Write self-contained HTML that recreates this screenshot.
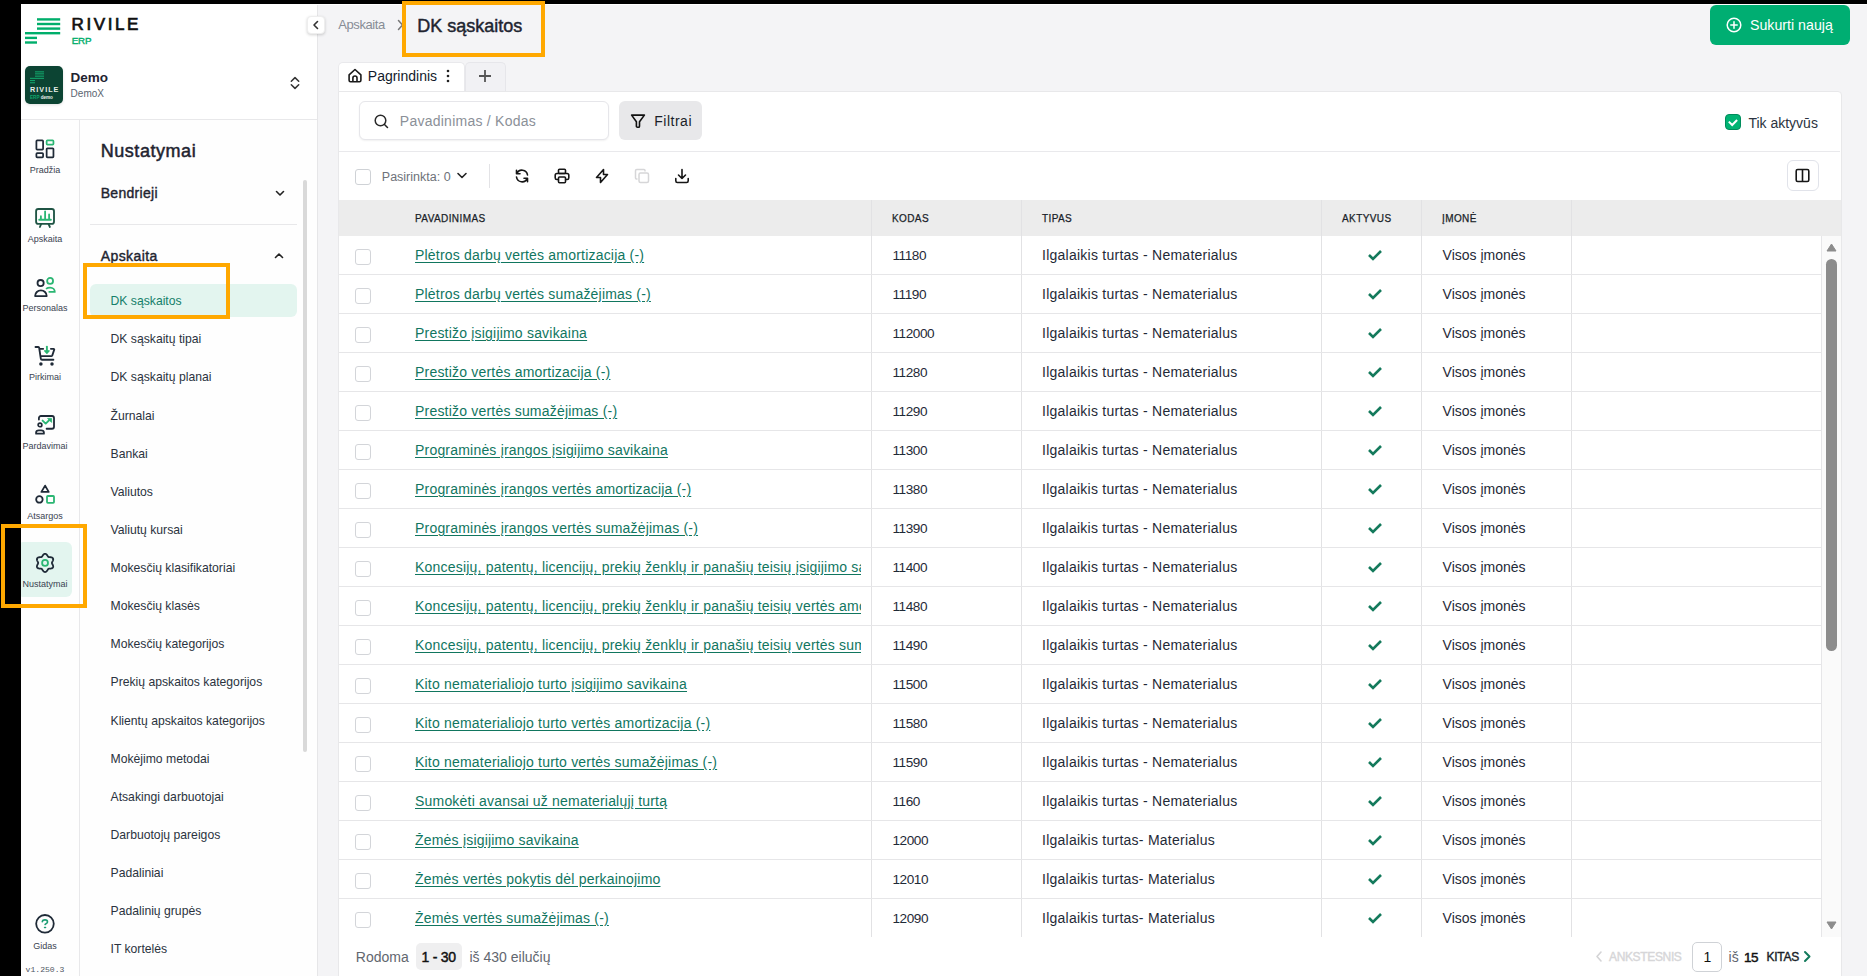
<!DOCTYPE html>
<html><head><meta charset="utf-8">
<style>
*{box-sizing:border-box;margin:0;padding:0}
html,body{width:1867px;height:976px;overflow:hidden;background:#000;font-family:"Liberation Sans",sans-serif;color:#1f2937;position:relative}
.a{position:absolute}
.t{position:absolute;white-space:nowrap;line-height:1}
</style></head><body>
<div class="a" style="left:21px;top:4px;width:296px;height:972px;background:#ffffff;"></div>
<div class="a" style="left:317px;top:4px;width:1px;height:972px;background:#e6e6e8;"></div>
<div class="a" style="left:21px;top:120px;width:58px;height:856px;background:#fefefe;"></div>
<div class="a" style="left:80px;top:120px;width:237px;height:856px;background:#fefefe;"></div>
<div class="a" style="left:21px;top:119px;width:296px;height:1px;background:#e8e8ea;"></div>
<div class="a" style="left:79px;top:120px;width:1px;height:856px;background:#e8e8ea;"></div>
<svg class="a" style="left:25px;top:18px;" width="36" height="27" viewBox="0 0 36 27" fill="none"><rect x="12" y="0.1999999999999993" width="23.2" height="2.4" fill="#00ae6b"/><rect x="12" y="4.800000000000001" width="23.2" height="2.4" fill="#00ae6b"/><rect x="12" y="9.399999999999999" width="23.2" height="2.4" fill="#00ae6b"/><rect x="0" y="14.0" width="35.2" height="2.4" fill="#00ae6b"/><rect x="0" y="18.700000000000003" width="12" height="2.4" fill="#00ae6b"/><rect x="0" y="23.299999999999997" width="12" height="2.4" fill="#00ae6b"/></svg>
<div class="t" style="left:71.50px;top:16.00px;font-size:17px;color:#111111;letter-spacing:2.6px;-webkit-text-stroke:0.7px #111;">RIVILE</div>
<div class="t" style="left:71.70px;top:36.00px;font-size:9.8px;color:#00ae6b;letter-spacing:-0.15px;-webkit-text-stroke:0.4px #00ae6b;">ERP</div>
<div class="a" style="left:25px;top:66px;width:38px;height:38px;background:#0c4433;border-radius:5px;box-shadow:0 1px 3px rgba(0,0,0,0.12);"></div>
<svg class="a" style="left:25px;top:66px;" width="38" height="38" viewBox="0 0 38 38" fill="none"><rect x="10" y="5.299999999999997" width="9" height="1.1" fill="#12a36a"/><rect x="10" y="7.299999999999997" width="9" height="1.1" fill="#12a36a"/><rect x="10" y="9.599999999999994" width="9" height="1.1" fill="#12a36a"/><rect x="5" y="11.799999999999997" width="14" height="1.1" fill="#12a36a"/><rect x="5" y="14.0" width="5" height="1.1" fill="#12a36a"/><rect x="5" y="16.200000000000003" width="5" height="1.1" fill="#12a36a"/></svg>
<div class="t" style="left:30.00px;top:86.00px;font-size:7.2px;font-weight:700;color:#e8efe9;letter-spacing:1.05px;">RIVILE</div>
<div class="t" style="left:30.00px;top:96.00px;font-size:4.6px;font-weight:700;color:#e8efe9;"><span style="color:#12a36a">ERP</span> demo</div>
<div class="t" style="left:70.60px;top:71.00px;font-size:13.5px;font-weight:700;color:#1f2430;">Demo</div>
<div class="t" style="left:70.60px;top:89.00px;font-size:10px;color:#5b6470;">DemoX</div>
<svg class="a" style="left:289px;top:76px;" width="12" height="14" viewBox="0 0 12 14" fill="none"><path d="M2.3 5.3 L6 1.6 L9.7 5.3 M2.3 8.7 L6 12.4 L9.7 8.7" stroke="#333" stroke-width="1.5" stroke-linecap="round" stroke-linejoin="round"/></svg>
<div class="a" style="left:17px;top:542px;width:55px;height:55px;background:#e3f5ef;border-radius:6px;"></div>
<div class="a" style="left:0px;top:0px;width:21px;height:976px;background:#000;"></div>
<div class="t" style="left:21px;width:48px;text-align:center;top:166px;font-size:9px;color:#3a4250">Pradžia</div>
<div class="t" style="left:21px;width:48px;text-align:center;top:235px;font-size:9px;color:#3a4250">Apskaita</div>
<div class="t" style="left:21px;width:48px;text-align:center;top:304px;font-size:9px;color:#3a4250">Personalas</div>
<div class="t" style="left:21px;width:48px;text-align:center;top:373px;font-size:9px;color:#3a4250">Pirkimai</div>
<div class="t" style="left:21px;width:48px;text-align:center;top:442px;font-size:9px;color:#3a4250">Pardavimai</div>
<div class="t" style="left:21px;width:48px;text-align:center;top:512px;font-size:9px;color:#3a4250">Atsargos</div>
<div class="t" style="left:21px;width:48px;text-align:center;top:580px;font-size:9px;color:#3a4250">Nustatymai</div>
<div class="t" style="left:21px;width:48px;text-align:center;top:942px;font-size:9px;color:#3a4250">Gidas</div>
<div class="t" style="left:21px;width:48px;text-align:center;top:965.5px;font-size:8.1px;color:#505764;font-family:'Liberation Mono',monospace">v1.250.3</div>
<svg class="a" style="left:30px;top:134px;" width="30" height="30" viewBox="0 0 30 30" fill="none"><rect x="6.4" y="6.4" width="6.7" height="9.2" rx="0.8" stroke="#1f2a37" stroke-width="1.75"/><rect x="6.4" y="19.15" width="6.7" height="4.1" rx="0.8" stroke="#1f2a37" stroke-width="1.75"/><rect x="16.65" y="6.4" width="6.8" height="4.25" rx="0.8" stroke="#2bb673" stroke-width="1.75"/><rect x="16.65" y="14.25" width="6.8" height="9" rx="0.8" stroke="#1f2a37" stroke-width="1.75"/></svg>
<svg class="a" style="left:30px;top:203px;" width="30" height="30" viewBox="0 0 30 30" fill="none"><rect x="6.1" y="6" width="17.9" height="14.9" rx="2.2" stroke="#1f5444" stroke-width="1.85"/><path d="M9.2 16.75 H20.9 M10.9 16.75 V13.2 M15.1 16.75 V8.3 M19.1 16.75 V11.4" stroke="#2bb673" stroke-width="1.8" stroke-linecap="round"/><path d="M11.1 21.2 L9.9 24 M18.6 21.2 L19.9 24" stroke="#1f5444" stroke-width="1.8" stroke-linecap="round"/></svg>
<svg class="a" style="left:30px;top:272px;" width="30" height="30" viewBox="0 0 30 30" fill="none"><circle cx="10.6" cy="11.1" r="3.1" stroke="#1f2a37" stroke-width="1.8"/><path d="M5.1 24.1 A5.8 5.8 0 0 1 16.7 24.1 Z" stroke="#1f2a37" stroke-width="1.8" stroke-linejoin="round"/><circle cx="20.1" cy="8.9" r="2.95" stroke="#2bb673" stroke-width="1.8"/><path d="M16 16.9 C17.2 16 18.6 15.6 20.1 15.6 C23 15.6 24.8 17.6 24.8 19.9 H18.6" stroke="#2bb673" stroke-width="1.8" stroke-linejoin="round"/></svg>
<svg class="a" style="left:30px;top:341px;" width="30" height="30" viewBox="0 0 30 30" fill="none"><path d="M5.5 6 H8.3 C8.8 6 9.1 6.4 9.2 7 L10.8 17.6 C10.9 18.3 11.4 18.75 12 18.75 H23.4" stroke="#1f2a37" stroke-width="1.85" stroke-linecap="round" stroke-linejoin="round"/><path d="M10.2 7.85 H13.2 M20.9 7.85 H23.6 C24.1 7.85 24.4 8.3 24.2 8.8 L22.3 14.4 C22.1 14.8 21.8 15.1 21.3 15.1 H11.4" stroke="#1f2a37" stroke-width="1.85" stroke-linecap="round" stroke-linejoin="round"/><circle cx="10.9" cy="22.9" r="1.75" fill="#1f2a37"/><circle cx="22" cy="22.9" r="1.75" fill="#1f2a37"/><path d="M16.9 5.6 V10.5" stroke="#2bb673" stroke-width="1.9" stroke-linecap="round"/><path d="M14.6 9.8 H19.2 L16.9 12.4 Z" fill="#2bb673" stroke="#2bb673" stroke-width="1.2" stroke-linejoin="round"/></svg>
<svg class="a" style="left:30px;top:410px;" width="30" height="30" viewBox="0 0 30 30" fill="none"><path d="M8.9 9.5 V8 C8.9 6.8 9.8 6 11 6 H22 C23.2 6 24 6.8 24 8 V16.7 C24 17.9 23.2 18.75 22 18.75 H16.6" stroke="#1f2a37" stroke-width="1.8" stroke-linecap="round"/><circle cx="10" cy="14.9" r="1.85" stroke="#1f2a37" stroke-width="1.7"/><path d="M6.1 23.7 V22.6 C6.1 21.1 7.4 20.3 9 20.3 H11 C12.6 20.3 13.9 21.1 13.9 22.6 V23.7 Z" stroke="#1f2a37" stroke-width="1.8" stroke-linejoin="round"/><path d="M12.6 10.6 L15.7 13.6 L19.6 9.8" stroke="#2bb673" stroke-width="1.9" stroke-linecap="round" stroke-linejoin="round"/><path d="M17.6 8.4 H21.6 V12.4 Z" fill="#2bb673" stroke="#2bb673" stroke-width="0.8" stroke-linejoin="round"/></svg>
<svg class="a" style="left:30px;top:479px;" width="30" height="30" viewBox="0 0 30 30" fill="none"><path d="M15.1 6.6 L18.7 12.9 H11.4 Z" stroke="#1f2a37" stroke-width="1.8" stroke-linejoin="round"/><circle cx="9.4" cy="20.45" r="3.25" stroke="#1f2a37" stroke-width="1.8"/><rect x="17" y="17" width="7" height="6.85" rx="0.8" stroke="#2bb673" stroke-width="1.8"/></svg>
<svg class="a" style="left:30px;top:548px;" width="30" height="30" viewBox="0 0 30 30" fill="none"><path d="M21.93 14.90 L21.98 14.54 L22.11 14.16 L22.30 13.75 L22.54 13.31 L22.78 12.83 L22.99 12.32 L23.13 11.80 L23.19 11.28 L23.13 10.78 L22.95 10.34 L22.65 9.96 L22.26 9.67 L21.78 9.45 L21.25 9.32 L20.71 9.24 L20.17 9.21 L19.67 9.19 L19.22 9.16 L18.83 9.08 L18.49 8.94 L18.20 8.72 L17.94 8.42 L17.68 8.05 L17.42 7.62 L17.12 7.17 L16.79 6.74 L16.40 6.35 L15.98 6.04 L15.52 5.85 L15.05 5.78 L14.58 5.85 L14.12 6.04 L13.70 6.35 L13.31 6.74 L12.98 7.17 L12.68 7.62 L12.42 8.05 L12.16 8.42 L11.90 8.72 L11.61 8.94 L11.27 9.08 L10.88 9.16 L10.43 9.19 L9.93 9.21 L9.39 9.24 L8.85 9.32 L8.32 9.45 L7.84 9.67 L7.45 9.96 L7.15 10.34 L6.97 10.78 L6.91 11.28 L6.97 11.80 L7.11 12.32 L7.32 12.83 L7.56 13.31 L7.80 13.75 L7.99 14.16 L8.12 14.54 L8.17 14.90 L8.12 15.26 L7.99 15.64 L7.80 16.05 L7.56 16.49 L7.32 16.97 L7.11 17.48 L6.97 18.00 L6.91 18.52 L6.97 19.02 L7.15 19.46 L7.45 19.84 L7.84 20.13 L8.32 20.35 L8.85 20.48 L9.39 20.56 L9.93 20.59 L10.43 20.61 L10.88 20.64 L11.27 20.72 L11.61 20.86 L11.90 21.08 L12.16 21.38 L12.42 21.75 L12.68 22.18 L12.98 22.63 L13.31 23.06 L13.70 23.45 L14.12 23.76 L14.58 23.95 L15.05 24.02 L15.52 23.95 L15.98 23.76 L16.40 23.45 L16.79 23.06 L17.12 22.63 L17.42 22.18 L17.68 21.75 L17.94 21.38 L18.20 21.08 L18.49 20.86 L18.83 20.72 L19.22 20.64 L19.67 20.61 L20.17 20.59 L20.71 20.56 L21.25 20.48 L21.78 20.35 L22.26 20.13 L22.65 19.84 L22.95 19.46 L23.13 19.02 L23.19 18.52 L23.13 18.00 L22.99 17.48 L22.78 16.97 L22.54 16.49 L22.30 16.05 L22.11 15.64 L21.98 15.26 L21.93 14.90Z" stroke="#1f2a37" stroke-width="1.8" stroke-linejoin="round"/><circle cx="15.05" cy="14.9" r="2.95" stroke="#2bb673" stroke-width="1.8"/></svg>
<svg class="a" style="left:33px;top:912px;" width="24" height="24" viewBox="0 0 24 24" fill="none"><circle cx="11.97" cy="11.8" r="8.8" stroke="#1f2a37" stroke-width="1.8"/><path d="M9.3 9.7 C9.5 8.5 10.6 7.9 12 7.9 C13.5 7.9 14.5 8.8 14.5 9.9 C14.5 11.2 12.9 11.6 12.1 12.5" stroke="#1e9e74" stroke-width="1.6" stroke-linecap="round"/><path d="M11.6 15.5 H12.5" stroke="#1e9e74" stroke-width="1.6" stroke-linecap="round"/></svg>
<div class="t" style="left:100.70px;top:142.00px;font-size:18px;color:#1f2430;letter-spacing:0.55px;-webkit-text-stroke:0.5px #1f2430;">Nustatymai</div>
<div class="t" style="left:100.70px;top:186.00px;font-size:14px;color:#1f2430;letter-spacing:0.3px;-webkit-text-stroke:0.4px #1f2430;">Bendrieji</div>
<svg class="a" style="left:274px;top:189px;" width="12" height="9" viewBox="0 0 12 9" fill="none"><path d="M2.5 2.5 L6 6 L9.5 2.5" stroke="#222" stroke-width="1.6" stroke-linecap="round" stroke-linejoin="round"/></svg>
<div class="a" style="left:90px;top:224px;width:207px;height:1px;background:#e8e8ea;"></div>
<div class="t" style="left:100.80px;top:249.00px;font-size:14px;color:#1f2430;letter-spacing:0.4px;-webkit-text-stroke:0.4px #1f2430;">Apskaita</div>
<svg class="a" style="left:273px;top:251px;" width="12" height="9" viewBox="0 0 12 9" fill="none"><path d="M2.5 6.5 L6 3 L9.5 6.5" stroke="#222" stroke-width="1.6" stroke-linecap="round" stroke-linejoin="round"/></svg>
<div class="a" style="left:90px;top:284px;width:207px;height:33px;background:#e3f5ef;border-radius:6px;"></div>
<div class="t" style="left:110.50px;top:295.00px;font-size:12.2px;color:#15806a;">DK sąskaitos</div>
<div class="t" style="left:110.50px;top:333.00px;font-size:12.2px;color:#2b3340;">DK sąskaitų tipai</div>
<div class="t" style="left:110.50px;top:371.00px;font-size:12.2px;color:#2b3340;">DK sąskaitų planai</div>
<div class="t" style="left:110.50px;top:410.00px;font-size:12.2px;color:#2b3340;">Žurnalai</div>
<div class="t" style="left:110.50px;top:448.00px;font-size:12.2px;color:#2b3340;">Bankai</div>
<div class="t" style="left:110.50px;top:486.00px;font-size:12.2px;color:#2b3340;">Valiutos</div>
<div class="t" style="left:110.50px;top:524.00px;font-size:12.2px;color:#2b3340;">Valiutų kursai</div>
<div class="t" style="left:110.50px;top:562.00px;font-size:12.2px;color:#2b3340;">Mokesčių klasifikatoriai</div>
<div class="t" style="left:110.50px;top:600.00px;font-size:12.2px;color:#2b3340;">Mokesčių klasės</div>
<div class="t" style="left:110.50px;top:638.00px;font-size:12.2px;color:#2b3340;">Mokesčių kategorijos</div>
<div class="t" style="left:110.50px;top:676.00px;font-size:12.2px;color:#2b3340;">Prekių apskaitos kategorijos</div>
<div class="t" style="left:110.50px;top:715.00px;font-size:12.2px;color:#2b3340;">Klientų apskaitos kategorijos</div>
<div class="t" style="left:110.50px;top:753.00px;font-size:12.2px;color:#2b3340;">Mokėjimo metodai</div>
<div class="t" style="left:110.50px;top:791.00px;font-size:12.2px;color:#2b3340;">Atsakingi darbuotojai</div>
<div class="t" style="left:110.50px;top:829.00px;font-size:12.2px;color:#2b3340;">Darbuotojų pareigos</div>
<div class="t" style="left:110.50px;top:867.00px;font-size:12.2px;color:#2b3340;">Padaliniai</div>
<div class="t" style="left:110.50px;top:905.00px;font-size:12.2px;color:#2b3340;">Padalinių grupės</div>
<div class="t" style="left:110.50px;top:943.00px;font-size:12.2px;color:#2b3340;">IT kortelės</div>
<div class="a" style="left:303px;top:180px;width:4px;height:572px;background:#d9d9d9;border-radius:2px;"></div>
<div class="a" style="left:318px;top:5px;width:1549px;height:971px;background:#f4f4f6;"></div>
<div class="a" style="left:317px;top:4px;width:1550px;height:1px;background:#ffffff;"></div>
<div class="a" style="left:307px;top:16px;width:18px;height:18px;background:#ffffff;border-radius:4px;box-shadow:0 1px 3px rgba(0,0,0,0.18);border:1px solid #eee;"></div>
<svg class="a" style="left:307px;top:16px;" width="18" height="18" viewBox="0 0 18 18" fill="none"><path d="M10.5 5.5 L7 9 L10.5 12.5" stroke="#333" stroke-width="1.6" stroke-linecap="round" stroke-linejoin="round"/></svg>
<div class="t" style="left:338.20px;top:18.00px;font-size:13px;color:#878c95;letter-spacing:-0.4px;">Apskaita</div>
<svg class="a" style="left:395px;top:18px;" width="10" height="14" viewBox="0 0 10 14" fill="none"><path d="M3.5 2.5 L7.5 7 L3.5 11.5" stroke="#777" stroke-width="1.5" stroke-linecap="round" stroke-linejoin="round"/></svg>
<div class="t" style="left:417.30px;top:17.00px;font-size:18px;color:#1f2430;-webkit-text-stroke:0.45px #1f2430;">DK sąskaitos</div>
<div class="a" style="left:1710px;top:5px;width:140px;height:40px;background:#00ae72;border-radius:6px;"></div>
<svg class="a" style="left:1726px;top:17px;" width="16" height="16" viewBox="0 0 16 16" fill="none"><circle cx="8" cy="8" r="6.8" stroke="#fff" stroke-width="1.5"/><path d="M8 4.8 V11.2 M4.8 8 H11.2" stroke="#fff" stroke-width="1.5" stroke-linecap="round"/></svg>
<div class="t" style="left:1750.00px;top:18.00px;font-size:14.2px;color:#ffffff;">Sukurti naują</div>
<div class="a" style="left:338px;top:61.5px;width:126.5px;height:30.5px;background:#ffffff;border-radius:5px 5px 0 0;border:1px solid #e9e9ec;border-bottom:none;"></div>
<div class="a" style="left:464.5px;top:61.5px;width:41px;height:30.5px;background:#f1f1f4;border-radius:5px 5px 0 0;border:1px solid #e6e6ea;border-bottom:none;"></div>
<svg class="a" style="left:347px;top:68px;" width="16" height="16" viewBox="0 0 16 16" fill="none"><path d="M2.1 6.8 L8 1.5 L13.9 6.8 V12.3 C13.9 13.1 13.3 13.8 12.5 13.8 H3.5 C2.7 13.8 2.1 13.1 2.1 12.3 Z M5.9 13.8 V9.9 C5.9 8.8 6.8 8 8 8 C9.2 8 10 8.8 10 9.9 V13.8" stroke="#1a1a1a" stroke-width="1.6" stroke-linejoin="round"/></svg>
<div class="t" style="left:367.80px;top:69.00px;font-size:14px;color:#121a2b;">Pagrindinis</div>
<svg class="a" style="left:445px;top:69px;" width="6" height="14" viewBox="0 0 6 14" fill="none"><circle cx="3" cy="2" r="1.3" fill="#222"/><circle cx="3" cy="7" r="1.3" fill="#222"/><circle cx="3" cy="12" r="1.3" fill="#222"/></svg>
<svg class="a" style="left:478px;top:69px;" width="14" height="14" viewBox="0 0 14 14" fill="none"><path d="M7 1 V13 M1 7 H13" stroke="#555" stroke-width="1.8"/></svg>
<div class="a" style="left:338px;top:91px;width:1504px;height:890px;background:#ffffff;border:1px solid #e8e8ea;border-radius:0 4px 4px 4px;"></div>
<div class="a" style="left:359px;top:101px;width:250px;height:39px;background:#ffffff;border:1px solid #e6e6ea;border-radius:6px;box-shadow:0 1px 2px rgba(0,0,0,0.06);"></div>
<svg class="a" style="left:373px;top:113px;" width="17" height="17" viewBox="0 0 17 17" fill="none"><circle cx="7.5" cy="7.5" r="5.3" stroke="#2a2a2a" stroke-width="1.5"/><path d="M11.5 11.5 L14.5 14.5" stroke="#222" stroke-width="1.5" stroke-linecap="round"/></svg>
<div class="t" style="left:399.80px;top:114.00px;font-size:14px;color:#8b9098;letter-spacing:0.25px;">Pavadinimas / Kodas</div>
<div class="a" style="left:619px;top:101px;width:83px;height:39px;background:#e8e8ea;border-radius:6px;"></div>
<svg class="a" style="left:629px;top:113px;" width="18" height="18" viewBox="0 0 18 18" fill="none"><path d="M2.6 2.1 H15.4 L10.5 8.8 V13.2 C10.5 13.9 10 14.3 9.3 14.3 H8.6 C7.9 14.3 7.4 13.9 7.4 13.2 V8.8 Z" stroke="#111" stroke-width="1.6" stroke-linejoin="round"/></svg>
<div class="t" style="left:654.30px;top:114.00px;font-size:14px;color:#1a1f29;letter-spacing:0.5px;">Filtrai</div>
<div class="a" style="left:1725px;top:114px;width:16px;height:16px;background:#00b373;border:1px solid #008c5c;border-radius:4px;"></div>
<svg class="a" style="left:1725px;top:114px;" width="16" height="16" viewBox="0 0 16 16" fill="none"><path d="M3.8 7.6 L7.2 11 L12.1 6" stroke="#fff" stroke-width="2" stroke-linecap="butt" stroke-linejoin="miter"/></svg>
<div class="t" style="left:1748.40px;top:116.00px;font-size:14px;color:#2b3340;">Tik aktyvūs</div>
<div class="a" style="left:339px;top:151px;width:1501px;height:1px;background:#e9e9ec;"></div>
<div class="a" style="left:355px;top:169px;width:16px;height:16px;background:#ffffff;border:1px solid #cfd2d6;border-radius:3px;"></div>
<div class="t" style="left:381.80px;top:171.00px;font-size:12.5px;color:#6e727a;">Pasirinkta: 0</div>
<svg class="a" style="left:455px;top:170px;" width="14" height="12" viewBox="0 0 14 12" fill="none"><path d="M3 3.5 L7 7.5 L11 3.5" stroke="#222" stroke-width="1.6" stroke-linecap="round" stroke-linejoin="round"/></svg>
<div class="a" style="left:489px;top:164px;width:1px;height:24px;background:#e3e3e6;"></div>
<svg class="a" style="left:514px;top:168px;" width="16" height="16" viewBox="0 0 16 16" fill="none"><path d="M13.5 7 A5.6 5.6 0 0 0 2.8 5.6 M2.5 2.2 V5.8 H6" stroke="#161616" stroke-width="1.6" stroke-linecap="round" stroke-linejoin="round"/><path d="M2.5 9 A5.6 5.6 0 0 0 13.2 10.4 M13.5 13.8 V10.2 H10" stroke="#161616" stroke-width="1.6" stroke-linecap="round" stroke-linejoin="round"/></svg>
<svg class="a" style="left:554px;top:168px;" width="16" height="16" viewBox="0 0 16 16" fill="none"><path d="M4 11.5 H2.8 C1.8 11.5 1.2 10.8 1.2 9.8 V7.2 C1.2 6.2 1.9 5.5 2.9 5.5 H13.1 C14.1 5.5 14.8 6.2 14.8 7.2 V9.8 C14.8 10.8 14.2 11.5 13.2 11.5 H12" stroke="#161616" stroke-width="1.6"/><rect x="4.5" y="1.2" width="7" height="4.3" rx="1" stroke="#161616" stroke-width="1.6"/><rect x="4.5" y="9" width="7" height="5.8" rx="1" stroke="#161616" stroke-width="1.6"/></svg>
<svg class="a" style="left:594px;top:168px;" width="16" height="16" viewBox="0 0 16 16" fill="none"><path d="M9.5 1.5 L9.5 6.5 H13.5 L6.5 14.5 V9.5 H2.5 Z" stroke="#161616" stroke-width="1.6" stroke-linejoin="round"/></svg>
<svg class="a" style="left:634px;top:168px;" width="16" height="16" viewBox="0 0 16 16" fill="none"><rect x="5" y="5" width="9.5" height="9.5" rx="1.5" stroke="#d6d6d8" stroke-width="1.5"/><path d="M11 3.5 V2.5 C11 1.9 10.6 1.5 10 1.5 H2.8 C2.2 1.5 1.5 2.1 1.5 2.8 V10 C1.5 10.6 2 11 2.5 11 H3.5" stroke="#d6d6d8" stroke-width="1.5"/></svg>
<svg class="a" style="left:674px;top:168px;" width="16" height="16" viewBox="0 0 16 16" fill="none"><path d="M1.8 10.5 V12.8 C1.8 13.8 2.4 14.5 3.4 14.5 H12.6 C13.6 14.5 14.2 13.8 14.2 12.8 V10.5 M8 1.5 V10.5 M4.5 7 L8 10.5 L11.5 7" stroke="#161616" stroke-width="1.6" stroke-linecap="round" stroke-linejoin="round"/></svg>
<div class="a" style="left:1787px;top:160px;width:32px;height:31px;background:#ffffff;border:1px solid #e1e3ea;border-radius:6px;"></div>
<svg class="a" style="left:1795px;top:168px;" width="15" height="15" viewBox="0 0 15 15" fill="none"><rect x="1.2" y="1.5" width="12.6" height="12" rx="1.5" stroke="#161616" stroke-width="1.6"/><path d="M7.5 1.5 V13.5" stroke="#161616" stroke-width="1.6"/></svg>
<div class="a" style="left:339px;top:200px;width:1502px;height:36px;background:#ececec;"></div>
<div class="a" style="left:871px;top:200px;width:1px;height:737px;background:#e2e2e4;"></div>
<div class="a" style="left:1021px;top:200px;width:1px;height:737px;background:#e2e2e4;"></div>
<div class="a" style="left:1321px;top:200px;width:1px;height:737px;background:#e2e2e4;"></div>
<div class="a" style="left:1421px;top:200px;width:1px;height:737px;background:#e2e2e4;"></div>
<div class="a" style="left:1571px;top:200px;width:1px;height:737px;background:#e2e2e4;"></div>
<div class="t" style="left:415.00px;top:214.00px;font-size:10px;color:#1a1f29;letter-spacing:0.4px;-webkit-text-stroke:0.25px #1a1f29;">PAVADINIMAS</div>
<div class="t" style="left:892.00px;top:214.00px;font-size:10px;color:#1a1f29;letter-spacing:0.4px;-webkit-text-stroke:0.25px #1a1f29;">KODAS</div>
<div class="t" style="left:1042.00px;top:214.00px;font-size:10px;color:#1a1f29;letter-spacing:0.4px;-webkit-text-stroke:0.25px #1a1f29;">TIPAS</div>
<div class="t" style="left:1342.00px;top:214.00px;font-size:10px;color:#1a1f29;letter-spacing:0.4px;-webkit-text-stroke:0.25px #1a1f29;">AKTYVUS</div>
<div class="t" style="left:1442.00px;top:214.00px;font-size:10px;color:#1a1f29;letter-spacing:0.4px;-webkit-text-stroke:0.25px #1a1f29;">ĮMONĖ</div>
<div class="a" style="left:339px;top:274px;width:1483px;height:1px;background:#e6e6e8;"></div>
<div class="a" style="left:355px;top:249px;width:16px;height:16px;background:#ffffff;border:1px solid #d3d5d9;border-radius:3px;"></div>
<div class="t" style="left:415px;top:248px;height:20px;font-size:14px;color:#11765f;width:446px;overflow:hidden;text-decoration:underline;text-underline-offset:2px;letter-spacing:0.2px">Plėtros darbų vertės amortizacija (-)</div>
<div class="t" style="left:892.50px;top:249.00px;font-size:13.6px;color:#1f2a37;letter-spacing:-0.45px;">11180</div>
<div class="t" style="left:1042.00px;top:248.00px;font-size:14px;color:#1f2a37;letter-spacing:0.25px;">Ilgalaikis turtas - Nematerialus</div>
<svg class="a" style="left:1367px;top:249px;top:249px" width="16" height="12" viewBox="0 0 16 12" fill="none"><path d="M2 6 L6 10 L14 2" stroke="#147a5c" stroke-width="2.6" stroke-linejoin="miter"/></svg>
<div class="t" style="left:1442.60px;top:248.00px;font-size:14px;color:#1f2a37;">Visos įmonės</div>
<div class="a" style="left:339px;top:313px;width:1483px;height:1px;background:#e6e6e8;"></div>
<div class="a" style="left:355px;top:288px;width:16px;height:16px;background:#ffffff;border:1px solid #d3d5d9;border-radius:3px;"></div>
<div class="t" style="left:415px;top:287px;height:20px;font-size:14px;color:#11765f;width:446px;overflow:hidden;text-decoration:underline;text-underline-offset:2px;letter-spacing:0.2px">Plėtros darbų vertės sumažėjimas (-)</div>
<div class="t" style="left:892.50px;top:288.00px;font-size:13.6px;color:#1f2a37;letter-spacing:-0.45px;">11190</div>
<div class="t" style="left:1042.00px;top:287.00px;font-size:14px;color:#1f2a37;letter-spacing:0.25px;">Ilgalaikis turtas - Nematerialus</div>
<svg class="a" style="left:1367px;top:249px;top:288px" width="16" height="12" viewBox="0 0 16 12" fill="none"><path d="M2 6 L6 10 L14 2" stroke="#147a5c" stroke-width="2.6" stroke-linejoin="miter"/></svg>
<div class="t" style="left:1442.60px;top:287.00px;font-size:14px;color:#1f2a37;">Visos įmonės</div>
<div class="a" style="left:339px;top:352px;width:1483px;height:1px;background:#e6e6e8;"></div>
<div class="a" style="left:355px;top:327px;width:16px;height:16px;background:#ffffff;border:1px solid #d3d5d9;border-radius:3px;"></div>
<div class="t" style="left:415px;top:326px;height:20px;font-size:14px;color:#11765f;width:446px;overflow:hidden;text-decoration:underline;text-underline-offset:2px;letter-spacing:0.2px">Prestižo įsigijimo savikaina</div>
<div class="t" style="left:892.50px;top:327.00px;font-size:13.6px;color:#1f2a37;letter-spacing:-0.45px;">112000</div>
<div class="t" style="left:1042.00px;top:326.00px;font-size:14px;color:#1f2a37;letter-spacing:0.25px;">Ilgalaikis turtas - Nematerialus</div>
<svg class="a" style="left:1367px;top:249px;top:327px" width="16" height="12" viewBox="0 0 16 12" fill="none"><path d="M2 6 L6 10 L14 2" stroke="#147a5c" stroke-width="2.6" stroke-linejoin="miter"/></svg>
<div class="t" style="left:1442.60px;top:326.00px;font-size:14px;color:#1f2a37;">Visos įmonės</div>
<div class="a" style="left:339px;top:391px;width:1483px;height:1px;background:#e6e6e8;"></div>
<div class="a" style="left:355px;top:366px;width:16px;height:16px;background:#ffffff;border:1px solid #d3d5d9;border-radius:3px;"></div>
<div class="t" style="left:415px;top:365px;height:20px;font-size:14px;color:#11765f;width:446px;overflow:hidden;text-decoration:underline;text-underline-offset:2px;letter-spacing:0.2px">Prestižo vertės amortizacija (-)</div>
<div class="t" style="left:892.50px;top:366.00px;font-size:13.6px;color:#1f2a37;letter-spacing:-0.45px;">11280</div>
<div class="t" style="left:1042.00px;top:365.00px;font-size:14px;color:#1f2a37;letter-spacing:0.25px;">Ilgalaikis turtas - Nematerialus</div>
<svg class="a" style="left:1367px;top:249px;top:366px" width="16" height="12" viewBox="0 0 16 12" fill="none"><path d="M2 6 L6 10 L14 2" stroke="#147a5c" stroke-width="2.6" stroke-linejoin="miter"/></svg>
<div class="t" style="left:1442.60px;top:365.00px;font-size:14px;color:#1f2a37;">Visos įmonės</div>
<div class="a" style="left:339px;top:430px;width:1483px;height:1px;background:#e6e6e8;"></div>
<div class="a" style="left:355px;top:405px;width:16px;height:16px;background:#ffffff;border:1px solid #d3d5d9;border-radius:3px;"></div>
<div class="t" style="left:415px;top:404px;height:20px;font-size:14px;color:#11765f;width:446px;overflow:hidden;text-decoration:underline;text-underline-offset:2px;letter-spacing:0.2px">Prestižo vertės sumažėjimas (-)</div>
<div class="t" style="left:892.50px;top:405.00px;font-size:13.6px;color:#1f2a37;letter-spacing:-0.45px;">11290</div>
<div class="t" style="left:1042.00px;top:404.00px;font-size:14px;color:#1f2a37;letter-spacing:0.25px;">Ilgalaikis turtas - Nematerialus</div>
<svg class="a" style="left:1367px;top:249px;top:405px" width="16" height="12" viewBox="0 0 16 12" fill="none"><path d="M2 6 L6 10 L14 2" stroke="#147a5c" stroke-width="2.6" stroke-linejoin="miter"/></svg>
<div class="t" style="left:1442.60px;top:404.00px;font-size:14px;color:#1f2a37;">Visos įmonės</div>
<div class="a" style="left:339px;top:469px;width:1483px;height:1px;background:#e6e6e8;"></div>
<div class="a" style="left:355px;top:444px;width:16px;height:16px;background:#ffffff;border:1px solid #d3d5d9;border-radius:3px;"></div>
<div class="t" style="left:415px;top:443px;height:20px;font-size:14px;color:#11765f;width:446px;overflow:hidden;text-decoration:underline;text-underline-offset:2px;letter-spacing:0.2px">Programinės įrangos įsigijimo savikaina</div>
<div class="t" style="left:892.50px;top:444.00px;font-size:13.6px;color:#1f2a37;letter-spacing:-0.45px;">11300</div>
<div class="t" style="left:1042.00px;top:443.00px;font-size:14px;color:#1f2a37;letter-spacing:0.25px;">Ilgalaikis turtas - Nematerialus</div>
<svg class="a" style="left:1367px;top:249px;top:444px" width="16" height="12" viewBox="0 0 16 12" fill="none"><path d="M2 6 L6 10 L14 2" stroke="#147a5c" stroke-width="2.6" stroke-linejoin="miter"/></svg>
<div class="t" style="left:1442.60px;top:443.00px;font-size:14px;color:#1f2a37;">Visos įmonės</div>
<div class="a" style="left:339px;top:508px;width:1483px;height:1px;background:#e6e6e8;"></div>
<div class="a" style="left:355px;top:483px;width:16px;height:16px;background:#ffffff;border:1px solid #d3d5d9;border-radius:3px;"></div>
<div class="t" style="left:415px;top:482px;height:20px;font-size:14px;color:#11765f;width:446px;overflow:hidden;text-decoration:underline;text-underline-offset:2px;letter-spacing:0.2px">Programinės įrangos vertės amortizacija (-)</div>
<div class="t" style="left:892.50px;top:483.00px;font-size:13.6px;color:#1f2a37;letter-spacing:-0.45px;">11380</div>
<div class="t" style="left:1042.00px;top:482.00px;font-size:14px;color:#1f2a37;letter-spacing:0.25px;">Ilgalaikis turtas - Nematerialus</div>
<svg class="a" style="left:1367px;top:249px;top:483px" width="16" height="12" viewBox="0 0 16 12" fill="none"><path d="M2 6 L6 10 L14 2" stroke="#147a5c" stroke-width="2.6" stroke-linejoin="miter"/></svg>
<div class="t" style="left:1442.60px;top:482.00px;font-size:14px;color:#1f2a37;">Visos įmonės</div>
<div class="a" style="left:339px;top:547px;width:1483px;height:1px;background:#e6e6e8;"></div>
<div class="a" style="left:355px;top:522px;width:16px;height:16px;background:#ffffff;border:1px solid #d3d5d9;border-radius:3px;"></div>
<div class="t" style="left:415px;top:521px;height:20px;font-size:14px;color:#11765f;width:446px;overflow:hidden;text-decoration:underline;text-underline-offset:2px;letter-spacing:0.2px">Programinės įrangos vertės sumažėjimas (-)</div>
<div class="t" style="left:892.50px;top:522.00px;font-size:13.6px;color:#1f2a37;letter-spacing:-0.45px;">11390</div>
<div class="t" style="left:1042.00px;top:521.00px;font-size:14px;color:#1f2a37;letter-spacing:0.25px;">Ilgalaikis turtas - Nematerialus</div>
<svg class="a" style="left:1367px;top:249px;top:522px" width="16" height="12" viewBox="0 0 16 12" fill="none"><path d="M2 6 L6 10 L14 2" stroke="#147a5c" stroke-width="2.6" stroke-linejoin="miter"/></svg>
<div class="t" style="left:1442.60px;top:521.00px;font-size:14px;color:#1f2a37;">Visos įmonės</div>
<div class="a" style="left:339px;top:586px;width:1483px;height:1px;background:#e6e6e8;"></div>
<div class="a" style="left:355px;top:561px;width:16px;height:16px;background:#ffffff;border:1px solid #d3d5d9;border-radius:3px;"></div>
<div class="t" style="left:415px;top:560px;height:20px;font-size:14px;color:#11765f;width:446px;overflow:hidden;text-decoration:underline;text-underline-offset:2px;letter-spacing:0.2px">Koncesijų, patentų, licencijų, prekių ženklų ir panašių teisių įsigijimo savikaina</div>
<div class="t" style="left:892.50px;top:561.00px;font-size:13.6px;color:#1f2a37;letter-spacing:-0.45px;">11400</div>
<div class="t" style="left:1042.00px;top:560.00px;font-size:14px;color:#1f2a37;letter-spacing:0.25px;">Ilgalaikis turtas - Nematerialus</div>
<svg class="a" style="left:1367px;top:249px;top:561px" width="16" height="12" viewBox="0 0 16 12" fill="none"><path d="M2 6 L6 10 L14 2" stroke="#147a5c" stroke-width="2.6" stroke-linejoin="miter"/></svg>
<div class="t" style="left:1442.60px;top:560.00px;font-size:14px;color:#1f2a37;">Visos įmonės</div>
<div class="a" style="left:339px;top:625px;width:1483px;height:1px;background:#e6e6e8;"></div>
<div class="a" style="left:355px;top:600px;width:16px;height:16px;background:#ffffff;border:1px solid #d3d5d9;border-radius:3px;"></div>
<div class="t" style="left:415px;top:599px;height:20px;font-size:14px;color:#11765f;width:446px;overflow:hidden;text-decoration:underline;text-underline-offset:2px;letter-spacing:0.2px">Koncesijų, patentų, licencijų, prekių ženklų ir panašių teisių vertės amortizacija (-)</div>
<div class="t" style="left:892.50px;top:600.00px;font-size:13.6px;color:#1f2a37;letter-spacing:-0.45px;">11480</div>
<div class="t" style="left:1042.00px;top:599.00px;font-size:14px;color:#1f2a37;letter-spacing:0.25px;">Ilgalaikis turtas - Nematerialus</div>
<svg class="a" style="left:1367px;top:249px;top:600px" width="16" height="12" viewBox="0 0 16 12" fill="none"><path d="M2 6 L6 10 L14 2" stroke="#147a5c" stroke-width="2.6" stroke-linejoin="miter"/></svg>
<div class="t" style="left:1442.60px;top:599.00px;font-size:14px;color:#1f2a37;">Visos įmonės</div>
<div class="a" style="left:339px;top:664px;width:1483px;height:1px;background:#e6e6e8;"></div>
<div class="a" style="left:355px;top:639px;width:16px;height:16px;background:#ffffff;border:1px solid #d3d5d9;border-radius:3px;"></div>
<div class="t" style="left:415px;top:638px;height:20px;font-size:14px;color:#11765f;width:446px;overflow:hidden;text-decoration:underline;text-underline-offset:2px;letter-spacing:0.2px">Koncesijų, patentų, licencijų, prekių ženklų ir panašių teisių vertės sumažėjimas (-)</div>
<div class="t" style="left:892.50px;top:639.00px;font-size:13.6px;color:#1f2a37;letter-spacing:-0.45px;">11490</div>
<div class="t" style="left:1042.00px;top:638.00px;font-size:14px;color:#1f2a37;letter-spacing:0.25px;">Ilgalaikis turtas - Nematerialus</div>
<svg class="a" style="left:1367px;top:249px;top:639px" width="16" height="12" viewBox="0 0 16 12" fill="none"><path d="M2 6 L6 10 L14 2" stroke="#147a5c" stroke-width="2.6" stroke-linejoin="miter"/></svg>
<div class="t" style="left:1442.60px;top:638.00px;font-size:14px;color:#1f2a37;">Visos įmonės</div>
<div class="a" style="left:339px;top:703px;width:1483px;height:1px;background:#e6e6e8;"></div>
<div class="a" style="left:355px;top:678px;width:16px;height:16px;background:#ffffff;border:1px solid #d3d5d9;border-radius:3px;"></div>
<div class="t" style="left:415px;top:677px;height:20px;font-size:14px;color:#11765f;width:446px;overflow:hidden;text-decoration:underline;text-underline-offset:2px;letter-spacing:0.2px">Kito nematerialiojo turto įsigijimo savikaina</div>
<div class="t" style="left:892.50px;top:678.00px;font-size:13.6px;color:#1f2a37;letter-spacing:-0.45px;">11500</div>
<div class="t" style="left:1042.00px;top:677.00px;font-size:14px;color:#1f2a37;letter-spacing:0.25px;">Ilgalaikis turtas - Nematerialus</div>
<svg class="a" style="left:1367px;top:249px;top:678px" width="16" height="12" viewBox="0 0 16 12" fill="none"><path d="M2 6 L6 10 L14 2" stroke="#147a5c" stroke-width="2.6" stroke-linejoin="miter"/></svg>
<div class="t" style="left:1442.60px;top:677.00px;font-size:14px;color:#1f2a37;">Visos įmonės</div>
<div class="a" style="left:339px;top:742px;width:1483px;height:1px;background:#e6e6e8;"></div>
<div class="a" style="left:355px;top:717px;width:16px;height:16px;background:#ffffff;border:1px solid #d3d5d9;border-radius:3px;"></div>
<div class="t" style="left:415px;top:716px;height:20px;font-size:14px;color:#11765f;width:446px;overflow:hidden;text-decoration:underline;text-underline-offset:2px;letter-spacing:0.2px">Kito nematerialiojo turto vertės amortizacija (-)</div>
<div class="t" style="left:892.50px;top:717.00px;font-size:13.6px;color:#1f2a37;letter-spacing:-0.45px;">11580</div>
<div class="t" style="left:1042.00px;top:716.00px;font-size:14px;color:#1f2a37;letter-spacing:0.25px;">Ilgalaikis turtas - Nematerialus</div>
<svg class="a" style="left:1367px;top:249px;top:717px" width="16" height="12" viewBox="0 0 16 12" fill="none"><path d="M2 6 L6 10 L14 2" stroke="#147a5c" stroke-width="2.6" stroke-linejoin="miter"/></svg>
<div class="t" style="left:1442.60px;top:716.00px;font-size:14px;color:#1f2a37;">Visos įmonės</div>
<div class="a" style="left:339px;top:781px;width:1483px;height:1px;background:#e6e6e8;"></div>
<div class="a" style="left:355px;top:756px;width:16px;height:16px;background:#ffffff;border:1px solid #d3d5d9;border-radius:3px;"></div>
<div class="t" style="left:415px;top:755px;height:20px;font-size:14px;color:#11765f;width:446px;overflow:hidden;text-decoration:underline;text-underline-offset:2px;letter-spacing:0.2px">Kito nematerialiojo turto vertės sumažėjimas (-)</div>
<div class="t" style="left:892.50px;top:756.00px;font-size:13.6px;color:#1f2a37;letter-spacing:-0.45px;">11590</div>
<div class="t" style="left:1042.00px;top:755.00px;font-size:14px;color:#1f2a37;letter-spacing:0.25px;">Ilgalaikis turtas - Nematerialus</div>
<svg class="a" style="left:1367px;top:249px;top:756px" width="16" height="12" viewBox="0 0 16 12" fill="none"><path d="M2 6 L6 10 L14 2" stroke="#147a5c" stroke-width="2.6" stroke-linejoin="miter"/></svg>
<div class="t" style="left:1442.60px;top:755.00px;font-size:14px;color:#1f2a37;">Visos įmonės</div>
<div class="a" style="left:339px;top:820px;width:1483px;height:1px;background:#e6e6e8;"></div>
<div class="a" style="left:355px;top:795px;width:16px;height:16px;background:#ffffff;border:1px solid #d3d5d9;border-radius:3px;"></div>
<div class="t" style="left:415px;top:794px;height:20px;font-size:14px;color:#11765f;width:446px;overflow:hidden;text-decoration:underline;text-underline-offset:2px;letter-spacing:0.2px">Sumokėti avansai už nematerialųjį turtą</div>
<div class="t" style="left:892.50px;top:795.00px;font-size:13.6px;color:#1f2a37;letter-spacing:-0.45px;">1160</div>
<div class="t" style="left:1042.00px;top:794.00px;font-size:14px;color:#1f2a37;letter-spacing:0.25px;">Ilgalaikis turtas - Nematerialus</div>
<svg class="a" style="left:1367px;top:249px;top:795px" width="16" height="12" viewBox="0 0 16 12" fill="none"><path d="M2 6 L6 10 L14 2" stroke="#147a5c" stroke-width="2.6" stroke-linejoin="miter"/></svg>
<div class="t" style="left:1442.60px;top:794.00px;font-size:14px;color:#1f2a37;">Visos įmonės</div>
<div class="a" style="left:339px;top:859px;width:1483px;height:1px;background:#e6e6e8;"></div>
<div class="a" style="left:355px;top:834px;width:16px;height:16px;background:#ffffff;border:1px solid #d3d5d9;border-radius:3px;"></div>
<div class="t" style="left:415px;top:833px;height:20px;font-size:14px;color:#11765f;width:446px;overflow:hidden;text-decoration:underline;text-underline-offset:2px;letter-spacing:0.2px">Žemės įsigijimo savikaina</div>
<div class="t" style="left:892.50px;top:834.00px;font-size:13.6px;color:#1f2a37;letter-spacing:-0.45px;">12000</div>
<div class="t" style="left:1042.00px;top:833.00px;font-size:14px;color:#1f2a37;letter-spacing:0.25px;">Ilgalaikis turtas- Materialus</div>
<svg class="a" style="left:1367px;top:249px;top:834px" width="16" height="12" viewBox="0 0 16 12" fill="none"><path d="M2 6 L6 10 L14 2" stroke="#147a5c" stroke-width="2.6" stroke-linejoin="miter"/></svg>
<div class="t" style="left:1442.60px;top:833.00px;font-size:14px;color:#1f2a37;">Visos įmonės</div>
<div class="a" style="left:339px;top:898px;width:1483px;height:1px;background:#e6e6e8;"></div>
<div class="a" style="left:355px;top:873px;width:16px;height:16px;background:#ffffff;border:1px solid #d3d5d9;border-radius:3px;"></div>
<div class="t" style="left:415px;top:872px;height:20px;font-size:14px;color:#11765f;width:446px;overflow:hidden;text-decoration:underline;text-underline-offset:2px;letter-spacing:0.2px">Žemės vertės pokytis dėl perkainojimo</div>
<div class="t" style="left:892.50px;top:873.00px;font-size:13.6px;color:#1f2a37;letter-spacing:-0.45px;">12010</div>
<div class="t" style="left:1042.00px;top:872.00px;font-size:14px;color:#1f2a37;letter-spacing:0.25px;">Ilgalaikis turtas- Materialus</div>
<svg class="a" style="left:1367px;top:249px;top:873px" width="16" height="12" viewBox="0 0 16 12" fill="none"><path d="M2 6 L6 10 L14 2" stroke="#147a5c" stroke-width="2.6" stroke-linejoin="miter"/></svg>
<div class="t" style="left:1442.60px;top:872.00px;font-size:14px;color:#1f2a37;">Visos įmonės</div>
<div class="a" style="left:355px;top:912px;width:16px;height:16px;background:#ffffff;border:1px solid #d3d5d9;border-radius:3px;"></div>
<div class="t" style="left:415px;top:911px;height:20px;font-size:14px;color:#11765f;width:446px;overflow:hidden;text-decoration:underline;text-underline-offset:2px;letter-spacing:0.2px">Žemės vertės sumažėjimas (-)</div>
<div class="t" style="left:892.50px;top:912.00px;font-size:13.6px;color:#1f2a37;letter-spacing:-0.45px;">12090</div>
<div class="t" style="left:1042.00px;top:911.00px;font-size:14px;color:#1f2a37;letter-spacing:0.25px;">Ilgalaikis turtas- Materialus</div>
<svg class="a" style="left:1367px;top:249px;top:912px" width="16" height="12" viewBox="0 0 16 12" fill="none"><path d="M2 6 L6 10 L14 2" stroke="#147a5c" stroke-width="2.6" stroke-linejoin="miter"/></svg>
<div class="t" style="left:1442.60px;top:911.00px;font-size:14px;color:#1f2a37;">Visos įmonės</div>
<div class="a" style="left:1821px;top:236px;width:20px;height:701px;background:#fafafa;border-left:1px solid #e6e6e8;"></div>
<svg class="a" style="left:1826px;top:243px;" width="11" height="9" viewBox="0 0 11 9" fill="none"><path d="M5.5 1 L10 8 H1 Z" fill="#8c8c8c" stroke="#8c8c8c" stroke-width="1" stroke-linejoin="round"/></svg>
<div class="a" style="left:1826px;top:259px;width:11px;height:392px;background:#8c8c8c;border-radius:5.5px;"></div>
<svg class="a" style="left:1826px;top:921px;" width="11" height="9" viewBox="0 0 11 9" fill="none"><path d="M5.5 8 L10 1 H1 Z" fill="#8c8c8c" stroke="#8c8c8c" stroke-width="1" stroke-linejoin="round"/></svg>
<div class="t" style="left:355.80px;top:950.00px;font-size:14px;color:#62676f;">Rodoma</div>
<div class="a" style="left:416px;top:943px;width:46px;height:27px;background:#efeff0;border-radius:5px;"></div>
<div class="t" style="left:421.50px;top:950.00px;font-size:14px;color:#111;letter-spacing:-0.25px;-webkit-text-stroke:0.45px #111;">1 - 30</div>
<div class="t" style="left:469.50px;top:950.00px;font-size:14px;color:#62676f;">iš 430 eilučių</div>
<svg class="a" style="left:1595px;top:950px;" width="8" height="13" viewBox="0 0 8 13" fill="none"><path d="M6 2 L2 6.5 L6 11" stroke="#d4d4d6" stroke-width="1.6" stroke-linecap="round" stroke-linejoin="round"/></svg>
<div class="t" style="left:1609.00px;top:951.00px;font-size:12px;color:#d6d6d8;letter-spacing:-0.35px;-webkit-text-stroke:0.4px #d6d6d8;">ANKSTESNIS</div>
<div class="a" style="left:1692px;top:942px;width:30px;height:30px;background:#ffffff;border:1px solid #cfd2d6;border-radius:5px;"></div>
<div class="t" style="left:1703.50px;top:950.00px;font-size:14px;color:#111;">1</div>
<div class="t" style="left:1728.60px;top:950.00px;font-size:14px;color:#62676f;">iš</div>
<div class="t" style="left:1744.00px;top:951.00px;font-size:13.5px;color:#111;letter-spacing:-0.6px;-webkit-text-stroke:0.45px #111;">15</div>
<div class="t" style="left:1766.40px;top:951.00px;font-size:12px;color:#1a1f29;letter-spacing:-0.2px;-webkit-text-stroke:0.4px #1a1f29;">KITAS</div>
<svg class="a" style="left:1802px;top:950px;" width="10" height="13" viewBox="0 0 10 13" fill="none"><path d="M3 2 L7.5 6.5 L3 11" stroke="#137a5c" stroke-width="2" stroke-linecap="round" stroke-linejoin="round"/></svg>
<div class="a" style="left:402px;top:1px;width:143px;height:56px;border:4px solid #ffa800"></div>
<div class="a" style="left:83px;top:263px;width:147px;height:56px;border:4px solid #ffa800"></div>
<div class="a" style="left:1px;top:524px;width:86px;height:84px;border:4px solid #ffa800"></div>
</body></html>
